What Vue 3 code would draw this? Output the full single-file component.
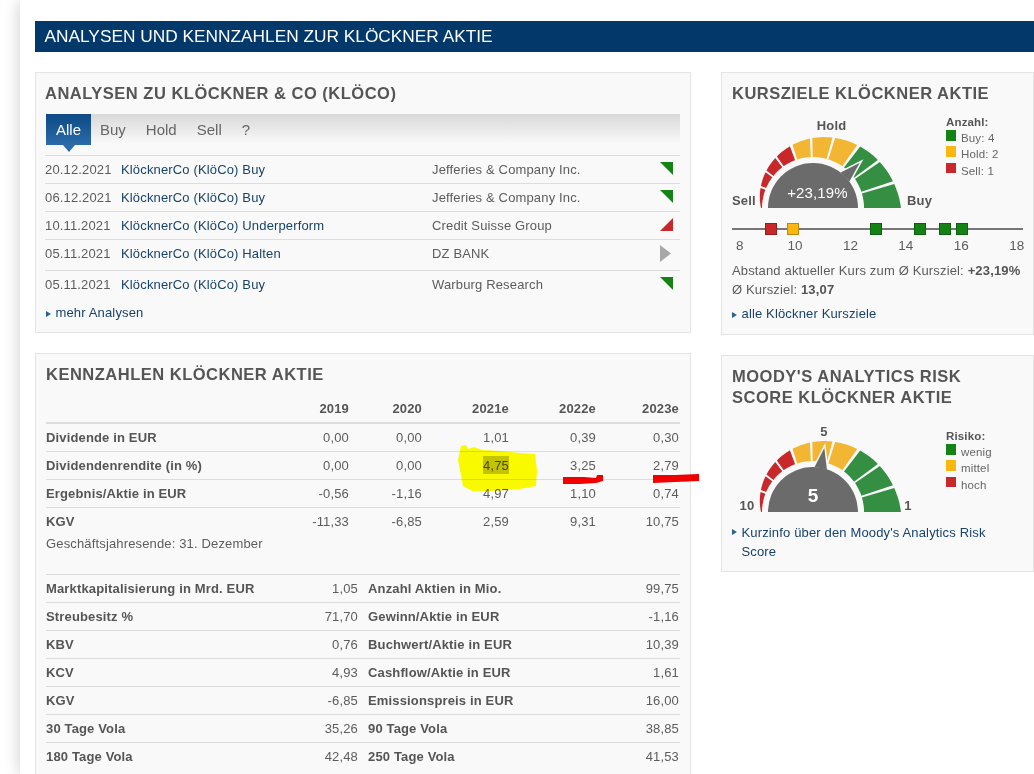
<script setup>
const analyses = [
  { d: '20.12.2021', t: 'KlöcknerCo (KlöCo) Buy', f: 'Jefferies & Company Inc.', s: 'buy' },
  { d: '06.12.2021', t: 'KlöcknerCo (KlöCo) Buy', f: 'Jefferies & Company Inc.', s: 'buy' },
  { d: '10.11.2021', t: 'KlöcknerCo (KlöCo) Underperform', f: 'Credit Suisse Group', s: 'sell' },
  { d: '05.11.2021', t: 'KlöcknerCo (KlöCo) Halten', f: 'DZ BANK', s: 'hold', tall: true },
  { d: '05.11.2021', t: 'KlöcknerCo (KlöCo) Buy', f: 'Warburg Research', s: 'buy' }
]
const years = ['2019', '2020', '2021e', '2022e', '2023e']
const kpi = [
  ['Dividende in EUR', '0,00', '0,00', '1,01', '0,39', '0,30'],
  ['Dividendenrendite (in %)', '0,00', '0,00', '4,75', '3,25', '2,79'],
  ['Ergebnis/Aktie in EUR', '-0,56', '-1,16', '4,97', '1,10', '0,74'],
  ['KGV', '-11,33', '-6,85', '2,59', '9,31', '10,75']
]
const facts = [
  ['Marktkapitalisierung in Mrd. EUR', '1,05', 'Anzahl Aktien in Mio.', '99,75'],
  ['Streubesitz %', '71,70', 'Gewinn/Aktie in EUR', '-1,16'],
  ['KBV', '0,76', 'Buchwert/Aktie in EUR', '10,39'],
  ['KCV', '4,93', 'Cashflow/Aktie in EUR', '1,61'],
  ['KGV', '-6,85', 'Emissionspreis in EUR', '16,00'],
  ['30 Tage Vola', '35,26', '90 Tage Vola', '38,85'],
  ['180 Tage Vola', '42,48', '250 Tage Vola', '41,53']
]
const markers = [
  { x: 39, c: 'red' }, { x: 61, c: 'yellow' }, { x: 144, c: 'green' },
  { x: 188, c: 'green' }, { x: 213, c: 'green' }, { x: 230, c: 'green' }
]

// Gauge: centre (81, 78) in the svg; the outer edge grows linearly from left to right.
const CX = 81, CY = 78, INNER = 51
const outer = a => 88 - 36 * (a / 180)
const pt = (a, r) => {
  const t = (a * Math.PI) / 180
  return `${(CX + r * Math.cos(t)).toFixed(1)} ${(CY - r * Math.sin(t)).toFixed(1)}`
}
const seg = (a0, a1) => {
  const pts = []
  for (let i = 0; i <= 8; i++) {
    const a = a0 + ((a1 - a0) * i) / 8
    pts.push(pt(a, outer(a)))
  }
  for (let i = 8; i >= 0; i--) {
    const a = a0 + ((a1 - a0) * i) / 8
    pts.push(pt(a, INNER))
  }
  return 'M' + pts.join('L') + 'Z'
}
const G = '#358f43', Y = '#f2b632', R = '#c9282a'
const segments = [
  [0, 16.5, G], [18.5, 34.5, G], [36.5, 52.5, G],
  [55, 72.5, Y], [74.5, 90.5, Y], [92.5, 108, Y],
  [110.5, 125, R], [127, 141, R], [143, 157, R], [159, 180, R]
].map(([a, b, c]) => ({ d: seg(a, b), c }))
const pointer = a => `${pt(a - 8, 45)} ${pt(a, 65)} ${pt(a + 8, 45)}`
const grey = `M${CX - 45} ${CY}A45 45 0 0 1 ${CX + 45} ${CY}Z`
</script>

<template>
  <div class="page">
    <h1 class="banner">ANALYSEN UND KENNZAHLEN ZUR KLÖCKNER AKTIE</h1>
    <div class="columns">
      <div class="col-left">
        <section class="panel analysen">
          <h2>ANALYSEN ZU KLÖCKNER &amp; CO (KLÖCO)</h2>
          <div class="tabs">
            <span class="tab active">Alle</span>
            <span class="tab">Buy</span>
            <span class="tab">Hold</span>
            <span class="tab">Sell</span>
            <span class="tab">?</span>
          </div>
          <div class="a-list">
            <div v-for="(a, i) in analyses" :key="i" class="a-row" :class="{ tall: a.tall }">
              <span class="a-date">{{ a.d }}</span>
              <a class="a-title">{{ a.t }}</a>
              <span class="a-firm">{{ a.f }}</span>
              <svg class="a-icon" width="14" height="18" viewBox="0 0 14 18">
                <polygon v-if="a.s === 'buy'" points="0,1 13,1 13,14" fill="#158215" />
                <polygon v-else-if="a.s === 'sell'" points="0,14 13,1 13,14" fill="#c9282a" />
                <polygon v-else points="0,0 11,8.5 0,17" fill="#a8a8a8" />
              </svg>
            </div>
          </div>
          <a class="more"><i class="caret"></i>mehr Analysen</a>
        </section>

        <section class="panel kennzahlen">
          <h2>KENNZAHLEN KLÖCKNER AKTIE</h2>
          <div class="k-row k-head">
            <span></span>
            <b v-for="y in years" :key="y">{{ y }}</b>
          </div>
          <div v-for="(r, n) in kpi" :key="r[0]" class="k-row" :class="{ 'no-line': n === kpi.length - 1 }">
            <b class="label">{{ r[0] }}</b>
            <span v-for="(v, i) in r.slice(1)" :key="i">{{ v }}</span>
          </div>
          <p class="fiscal">Geschäftsjahresende: 31. Dezember</p>
          <div class="facts">
            <div v-for="r in facts" :key="r[0] + r[2]" class="f-row">
              <b class="label">{{ r[0] }}</b>
              <span>{{ r[1] }}</span>
              <b class="label">{{ r[2] }}</b>
              <span>{{ r[3] }}</span>
            </div>
          </div>
        </section>
      </div>

      <div class="col-right">
        <section class="panel kursziele">
          <h2>KURSZIELE KLÖCKNER AKTIE</h2>
          <div class="gauge-wrap first">
            <svg class="gauge" width="214" height="88" viewBox="0 -10 214 88">
              <path v-for="(s, i) in segments" :key="i" :d="s.d" :fill="s.c" />
              <polygon :points="pointer(44)" fill="#6b6b6b" stroke="#f9f9f9" stroke-width="3" stroke-linejoin="miter" />
              <path :d="grey" fill="#6b6b6b" />
              <polygon :points="pointer(44)" fill="#6b6b6b" />
              <text x="85.5" y="67.5" class="g-val" text-anchor="middle">+23,19%</text>
              <text x="0" y="75" class="g-lab">Sell</text>
              <text x="99.5" y="0" class="g-lab" text-anchor="middle">Hold</text>
              <text x="175" y="75" class="g-lab">Buy</text>
            </svg>
            <div class="legend">
              <b>Anzahl:</b>
              <div class="lg"><i class="sq green"></i><span>Buy: 4</span></div>
              <div class="lg"><i class="sq yellow"></i><span>Hold: 2</span></div>
              <div class="lg"><i class="sq red"></i><span>Sell: 1</span></div>
            </div>
          </div>
          <div class="scale">
            <div class="scale-line">
              <i v-for="(m, i) in markers" :key="i" class="mark" :class="m.c" :style="{ left: m.x + 'px' }"></i>
            </div>
            <div class="scale-nums">
              <span>8</span><span>10</span><span>12</span><span>14</span><span>16</span><span>18</span>
            </div>
          </div>
          <p class="line">Abstand aktueller Kurs zum Ø Kursziel: <b>+23,19%</b></p>
          <p class="line">Ø Kursziel: <b>13,07</b></p>
          <a class="more side"><i class="caret"></i>alle Klöckner Kursziele</a>
        </section>

        <section class="panel moody">
          <h2>MOODY'S ANALYTICS RISK SCORE KLÖCKNER AKTIE</h2>
          <div class="gauge-wrap second">
            <svg class="gauge" width="214" height="96" viewBox="0 -18 214 96">
              <path v-for="(s, i) in segments" :key="i" :d="s.d" :fill="s.c" />
              <polygon :points="pointer(80)" fill="#6b6b6b" stroke="#f9f9f9" stroke-width="3" stroke-linejoin="miter" />
              <path :d="grey" fill="#6b6b6b" />
              <polygon :points="pointer(80)" fill="#6b6b6b" />
              <text x="81" y="67.5" class="g-big" text-anchor="middle">5</text>
              <text x="15" y="75.5" class="g-lab" text-anchor="middle">10</text>
              <text x="92" y="2" class="g-lab" text-anchor="middle">5</text>
              <text x="176" y="75.5" class="g-lab" text-anchor="middle">1</text>
            </svg>
            <div class="legend">
              <b>Risiko:</b>
              <div class="lg"><i class="sq green"></i><span>wenig</span></div>
              <div class="lg"><i class="sq yellow"></i><span>mittel</span></div>
              <div class="lg"><i class="sq red"></i><span>hoch</span></div>
            </div>
          </div>
          <a class="more side wrap"><i class="caret"></i><span>Kurzinfo über den Moody's Analytics Risk Score</span></a>
        </section>
      </div>
    </div>

    <svg class="marks" width="1034" height="774" viewBox="0 0 1034 774">
      <path class="hl" d="M461 446L466 445L468 449L474 447L482 450L500 451L520 453L535 454L537 470L536 486L520 489L490 491L472 491L463 486L460 470L458 460Z" fill="#ffff00" />
      <rect class="hl" x="483" y="456" width="26" height="18" fill="#c8c8c0" />
      <path d="M563 477L584 477L596 478L597 475L603 475L603 481L596 483L580 484L563 484Z" fill="#f00000" />
      <path d="M653 475L675 475L699 474L699 481L675 482L653 483Z" fill="#f00000" />
    </svg>
  </div>
</template>

<style>
html, body { margin: 0; background: #fff; overflow: hidden; }
</style>

<style scoped>
.page {
  position: relative;
  box-sizing: border-box;
  width: 1014px;
  height: 774px;
  margin-left: 20px;
  padding: 21px 0 0 15px;
  overflow: hidden;
  background: #fff;
  box-shadow: -2px 0 14px rgba(0, 0, 0, 0.16);
  font-family: "Liberation Sans", Arial, sans-serif;
  font-size: 13px;
  color: #5c5c5c;
  letter-spacing: 0.15px;
}
.banner {
  margin: 0;
  height: 31px;
  line-height: 31px;
  padding-left: 9.5px;
  background: #03386b;
  color: #fff;
  font-size: 17.3px;
  font-weight: 400;
  letter-spacing: 0;
}
.columns { display: flex; gap: 30px; margin-top: 20px; align-items: flex-start; }
.col-left { width: 656px; flex: none; display: flex; flex-direction: column; gap: 20px; }
.col-right { width: 313px; flex: none; display: flex; flex-direction: column; gap: 20px; }
.panel {
  box-sizing: border-box;
  background: #f9f9f9;
  border: 1px solid #e4e4e4;
  padding: 0 10px;
}
h2 {
  margin: 0;
  font-size: 16.5px;
  line-height: 21px;
  font-weight: 700;
  color: #555;
  letter-spacing: 0.5px;
}
.analysen { height: 261px; padding-top: 10px; }
.analysen h2 { margin-left: -1px; }
.tabs {
  display: flex;
  margin-top: 10px;
  height: 31px;
  background: linear-gradient(#d9d9d9, #fafafa);
}
.tab { padding: 0 10px; line-height: 31px; font-size: 15px; letter-spacing: 0; color: #666; }
.tab.active {
  position: relative;
  width: 45px;
  box-sizing: border-box;
  margin-right: -1px;
  text-align: center;
  padding: 0;
  color: #fff;
  background: linear-gradient(#0d4a86, #2a6ba8);
}
.tab.active::after {
  content: "";
  position: absolute;
  left: 16.5px;
  top: 31px;
  border-left: 6px solid transparent;
  border-right: 6px solid transparent;
  border-top: 7px solid #2a6ba8;
}
.a-list { margin-top: 10px; }
.a-row {
  display: flex;
  align-items: center;
  height: 27px;
  border-top: 1px solid #ddd;
  margin-left: -1px;
}
.a-row.tall { padding-bottom: 3px; }
.a-date { width: 76px; flex: none; }
.a-title { width: 311px; flex: none; color: #17426b; }
.a-firm { flex: 1; }
.a-icon { flex: none; margin-right: 6px; }
.more { display: flex; align-items: baseline; color: #17426b; margin-top: 7px; }
.caret {
  flex: none;
  width: 0;
  height: 0;
  border-left: 5px solid #2a6496;
  border-top: 3.5px solid transparent;
  border-bottom: 3.5px solid transparent;
  margin-right: 4.5px;
}
.kennzahlen { padding-top: 10px; height: 500px; }
.k-row {
  display: grid;
  grid-template-columns: 233px 70px 73px 87px 87px 83px;
  height: 27px;
  line-height: 27px;
  border-bottom: 1px solid #ddd;
}
.k-row.no-line { border-bottom: 0; }
.k-row > span, .k-row > b { text-align: right; }
.k-row > .label { text-align: left; }
.k-head { margin-top: 10px; border-bottom: 2px solid #ddd; color: #555; }
.label, b { color: #555; }
.fiscal { margin: 0; line-height: 18px; height: 39px; }
.facts { border-top: 1px solid #ddd; }
.f-row {
  display: grid;
  grid-template-columns: 263px 49px 10px 1fr 40px;
  height: 27px;
  line-height: 27px;
  border-bottom: 1px solid #ddd;
}
.f-row:last-child { border-bottom: 0; }
.f-row > :nth-child(2) { grid-column: 2; text-align: right; }
.f-row > :nth-child(3) { grid-column: 4; white-space: nowrap; }
.f-row > :nth-child(4) { grid-column: 5; text-align: right; margin-right: 1px; }
.kursziele { height: 263px; padding-top: 10px; }
.moody { height: 217px; padding-top: 10px; }
.gauge-wrap { display: flex; align-items: flex-start; }
.gauge-wrap.first { margin-top: 16px; }
.gauge-wrap.second { margin-top: 8px; }
.gauge { flex: none; display: block; overflow: visible; }
.g-lab { font-size: 13px; font-weight: 700; fill: #555; }
.g-val { font-size: 15px; fill: #fff; }
.g-big { font-size: 19px; fill: #fff; font-weight: 700; }
.legend { font-size: 11.5px; line-height: 16px; }
.first .legend { margin-top: -5px; }
.second .legend { margin-top: 13px; }
.legend b { display: block; line-height: 15px; }
.lg { display: flex; align-items: flex-start; height: 16.3px; color: #666; }
.sq { width: 10px; height: 10.5px; margin-right: 5px; flex: none; }
.green { background: #158215; }
.yellow { background: #fbb60f; }
.red { background: #c9282a; }
.scale { margin-top: 20px; margin-bottom: 8px; }
.scale-line { position: relative; height: 2px; background: #777; }
.mark {
  position: absolute;
  top: -5px;
  width: 10px;
  height: 10px;
  margin-left: -6px;
  border: 1px solid rgba(0, 0, 0, 0.25);
}
.scale-nums {
  display: grid;
  grid-template-columns: repeat(6, 55.4px);
  justify-items: center;
  margin: 8px 0 0 -20px;
  line-height: 15px;
  font-size: 13.5px;
  letter-spacing: 0;
}
.line { margin: 0; line-height: 19px; }
.side { margin-top: 7px; }
.wrap { margin-top: 11px; line-height: 19px; }
.wrap .caret { position: relative; top: -2px; }
.marks { position: absolute; left: -20px; top: 0; pointer-events: none; overflow: visible; }
.hl { mix-blend-mode: multiply; }
</style>
